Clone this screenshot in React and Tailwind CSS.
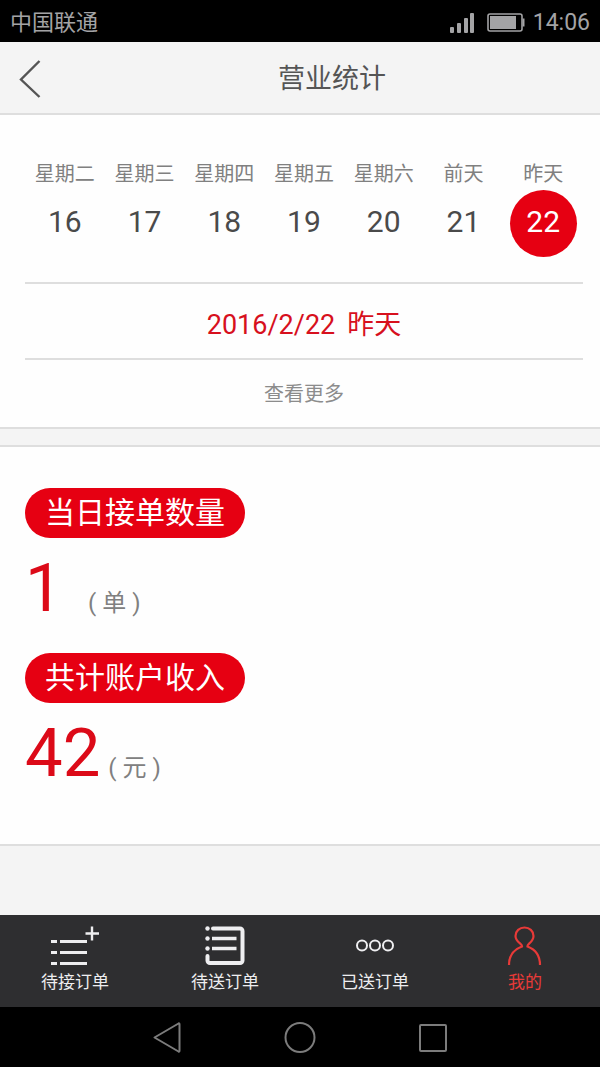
import React, { useState } from "react";

const days = [
  { label: "星期二", day: 16 },
  { label: "星期三", day: 17 },
  { label: "星期四", day: 18 },
  { label: "星期五", day: 19 },
  { label: "星期六", day: 20 },
  { label: "前天", day: 21 },
  { label: "昨天", day: 22 },
];

const stats = [
  { title: "当日接单数量", value: "1", unit: "单" },
  { title: "共计账户收入", value: "42", unit: "元" },
];

const tabs = [
  { name: "待接订单", icon: NewOrdersIcon },
  { name: "待送订单", icon: PendingIcon },
  { name: "已送订单", icon: DeliveredIcon },
  { name: "我的", icon: ProfileIcon },
];

function NewOrdersIcon() {
  return (
    <svg width="50" height="42" viewBox="0 0 50 42" fill="none" stroke="currentColor" strokeWidth="3">
      <path d="M1 17.5h6M10 17.5h27M1 28.5h6M10 28.5h27M1 39.5h6M10 39.5h27" />
      <path d="M42 2.5v14M35.5 9.5h13.5" strokeWidth="2.4" />
    </svg>
  );
}

function PendingIcon() {
  return (
    <svg width="40" height="42" viewBox="0 0 40 42" fill="none" stroke="currentColor" strokeWidth="4">
      <path d="M8 4.500h27a2.500 2.500 0 0 1 2.500 2.500v29.500a2.500 2.500 0 0 1-2.500 2.500H5a2.500 2.500 0 0 1-2.500-2.500V32" strokeLinecap="round" />
      <path d="M7 14.500h24.500M7 24.500h24.500" strokeWidth="3.500" />
      <g fill="currentColor" stroke="none">
        <circle cx="2.500" cy="4.500" r="2.200" />
        <circle cx="2.500" cy="14.500" r="2.200" />
        <circle cx="2.500" cy="24.500" r="2.200" />
      </g>
    </svg>
  );
}

function DeliveredIcon() {
  return (
    <svg width="40" height="42" viewBox="0 0 40 42" fill="none" stroke="currentColor" strokeWidth="2">
      <circle cx="7" cy="21.500" r="5" />
      <circle cx="20" cy="21.500" r="5" />
      <circle cx="33" cy="21.500" r="5" />
    </svg>
  );
}

function ProfileIcon() {
  return (
    <svg width="40" height="42" viewBox="0 0 40 42" fill="none" stroke="currentColor" strokeWidth="2.2" strokeLinejoin="round">
      <path d="M4 41C4 32 8.500 25.500 17 22.500C18 20 10.500 18.500 10.500 12C10.500 7 14.500 3.500 19.500 3.500S28.500 7 28.500 12C28.500 18.500 21.500 20 22.500 22.500C30.500 25.500 35 32 35 41" />
    </svg>
  );
}

function StatusBar() {
  return (
    <div className="flex h-[42px] items-center justify-between bg-black px-[10px] pt-[3px] text-[#a3a3a5]">
      <span className="text-[22px] leading-7">中国联通</span>
      <div className="flex items-center">
        <svg className="mr-3" width="26" height="22" viewBox="0 0 26 22" fill="currentColor">
          <rect x="1" y="15" width="4" height="6" rx="1" />
          <rect x="8" y="11" width="4" height="10" rx="1" />
          <rect x="15" y="6" width="4" height="15" rx="1" />
          <rect x="21" y="1" width="4" height="20" rx="1" />
        </svg>
        <svg className="mr-2" width="38" height="20" viewBox="0 0 38 20" fill="none" stroke="currentColor">
          <rect x="1" y="1" width="34" height="17" rx="2" strokeWidth="1.6" />
          <path d="M36.500 5.500v8" strokeWidth="2" />
          <rect x="3" y="3" width="26" height="13" fill="currentColor" stroke="none" />
        </svg>
        <span className="text-[23px] leading-7">14:06</span>
      </div>
    </div>
  );
}

function SystemNav() {
  return (
    <div className="flex h-[60px] items-center justify-center gap-[93px] bg-black text-[#7c7c7c]">
      <button aria-label="返回">
        <svg width="40" height="40" viewBox="0 0 40 40" fill="none" stroke="currentColor" strokeWidth="2" strokeLinejoin="round">
          <path d="M7.500 20.500L31.500 6.500Q32.500 6 32.500 7.500V33.500Q32.500 35 31.500 34.500Z" />
        </svg>
      </button>
      <button aria-label="主页">
        <svg width="40" height="40" viewBox="0 0 40 40" fill="none" stroke="currentColor" strokeWidth="2">
          <circle cx="20" cy="20.500" r="14.500" />
        </svg>
      </button>
      <button aria-label="最近任务">
        <svg width="40" height="40" viewBox="0 0 40 40" fill="none" stroke="currentColor" strokeWidth="2">
          <rect x="7" y="8" width="26" height="26" rx="1" />
        </svg>
      </button>
    </div>
  );
}

export default function App() {
  const [selectedDay, setSelectedDay] = useState(22);
  const [activeTab, setActiveTab] = useState("我的");
  const selected = days.find((d) => d.day === selectedDay);

  return (
    <div className="flex min-h-screen flex-col bg-[#f4f4f4] font-['Roboto','Noto_Sans_CJK_SC',sans-serif]">
      <StatusBar />

      <header className="flex h-[73px] items-center border-b-2 border-[#dedede] pt-[2px] text-[#555]">
        <button className="flex h-full w-16 items-center pl-[18px]" aria-label="返回">
          <svg width="24" height="40" viewBox="0 0 24 40" fill="none" stroke="currentColor" strokeWidth="2.4">
            <path d="M21.500 2L3 20.500L21.500 38" />
          </svg>
        </button>
        <h1 className="flex-1 text-center text-[27px] leading-9">营业统计</h1>
      </header>

      {/* Date picker */}
      <section className="border-b-2 border-[#dedede] bg-[#fefefe] pt-11 pr-[17px] pl-[25px]">
        <div className="grid grid-cols-7 pb-[25px]">
          {days.map((d) => (
            <button
              key={d.day}
              onClick={() => setSelectedDay(d.day)}
              className="flex flex-col items-center"
            >
              <span className="text-[20px] leading-[31px] text-[#808080]">{d.label}</span>
              <span
                className={`flex size-[67px] items-center justify-center rounded-full pb-1 text-[30px] ${
                  d.day === selectedDay ? "bg-[#e60012] text-white" : "text-[#4a4a4a]"
                }`}
              >
                {d.day}
              </span>
            </button>
          ))}
        </div>
        <p className="flex h-[78px] items-center justify-center gap-3 border-y-2 border-[#dedede] pt-2 text-[27px] text-[#d7101d]">
          <span>2016/2/{selected.day}</span>
          <span>{selected.label}</span>
        </p>
        <button className="h-[67px] w-full text-[20px] text-[#8c8c8c]">查看更多</button>
      </section>

      {/* Daily totals */}
      <section className="mt-4 flex flex-col gap-[35px] border-y-2 border-[#dedede] bg-[#fefefe] px-[25px] pt-[41px] pb-[61px]">
        {stats.map((s) => (
          <div key={s.title}>
            <h2 className="flex h-[50px] w-[220px] items-center justify-center rounded-full bg-[#e60012] pb-[2px] text-[30px] text-white">
              {s.title}
            </h2>
            <p className="flex h-20 items-baseline gap-2">
              <span className="min-w-[55px] text-[67px] leading-[100px] text-[#dc0a18]">{s.value}</span>
              <span className="flex gap-[6px] text-[24px] text-[#808080]">
                <span>(</span>
                <span>{s.unit}</span>
                <span>)</span>
              </span>
            </p>
          </div>
        ))}
      </section>

      <nav className="mt-auto grid h-[92px] grid-cols-4 bg-[#2e2e30]">
        {tabs.map((tab) => (
          <button
            key={tab.name}
            onClick={() => setActiveTab(tab.name)}
            className={`flex flex-col items-center pt-[9px] ${
              tab.name === activeTab ? "text-[#e83a38]" : "text-[#eeeef0]"
            }`}
          >
            <tab.icon />
            <span className="text-[17px] leading-8">{tab.name}</span>
          </button>
        ))}
      </nav>
      <SystemNav />
    </div>
  );
}
